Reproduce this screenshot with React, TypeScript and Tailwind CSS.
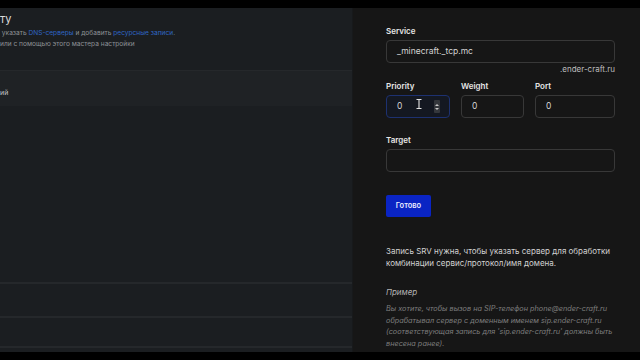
import React from "react";

function Field({ label, value, w, focused }: { label?: string; value: string; w: string; focused?: boolean }) {
  return (
    <div className={`flex shrink-0 flex-col ${w}`}>
      <div className="h-[12px] text-[8px] font-semibold leading-[12px] text-[#e6e6e6]">{label}</div>
      <div
        className={`relative mt-[3px] flex h-[23px] shrink-0 items-center rounded-[4px] border px-[10px] text-[8.5px] text-[#d4d4d4] ${
          focused ? "border-[#1d3170] bg-[#141821]" : "border-[#383838] bg-[#161616]"
        }`}
      >
        {value}
        {focused && (
          <>
            <svg className="absolute left-[29px] top-[3px]" width="6" height="10" viewBox="0 0 6 10">
              <path d="M0.5 0.5h5M0.5 9.5h5M3 0.5v9" stroke="#e5e5e5" strokeWidth="1.1" fill="none" />
            </svg>
            <div className="absolute right-[9px] top-[4px] flex h-[13px] w-[6px] flex-col items-center justify-center gap-[2px] rounded-[1px] bg-[#34373c]">
              <div className="h-0 w-0 border-x-[2px] border-b-[2px] border-x-transparent border-b-[#c8c8c8]" />
              <div className="h-0 w-0 border-x-[2px] border-t-[2px] border-x-transparent border-t-[#c8c8c8]" />
            </div>
          </>
        )}
      </div>
    </div>
  );
}

export default function App() {
  return (
    <div
      className="flex h-[360px] w-[640px] flex-col overflow-hidden bg-black"
      style={{ fontFamily: "Inter, 'Noto Sans', sans-serif" }}
    >
      <div className="h-[8px] shrink-0 bg-black" />
      <div className="flex h-[344px] shrink-0">
        {/* left dimmed page */}
        <div className="flex w-[352px] shrink-0 flex-col bg-[#1b1e21]">
          <div className="shrink-0 pt-[4px] text-[11px] leading-[14px] text-[#dcdcdc]">ту</div>
          <div className="mt-[2px] shrink-0 whitespace-nowrap text-[6.6px] leading-[11px] text-[#8e9296]">
            {"\u00a0"}указать <span className="text-[#2f66c6]">DNS-серверы</span> и добавить{" "}
            <span className="text-[#2f66c6]">ресурсные записи</span>.
          </div>
          <div className="shrink-0 whitespace-nowrap text-[6.6px] leading-[11px] text-[#8e9296]">
            или с помощью этого мастера настройки
          </div>
          <div className="mt-[20px] h-[36px] shrink-0 border-t border-[#25282b] bg-[#1f2225] pt-[17px] text-[7px] leading-[10px] text-[#c2c4c6]">
            ий
          </div>
          <div className="h-[176px] shrink-0" />
          <div className="h-[34px] shrink-0 border-t-[2px] border-[#25282b]" />
          <div className="h-[30px] shrink-0 border-t-[2px] border-[#25282b]" />
          <div className="shrink-0 border-t-[2px] border-[#25282b]" />
        </div>
        <div className="w-[1px] shrink-0 bg-[#17191b]" />
        {/* right drawer */}
        <div className="flex min-w-0 flex-1 flex-col bg-[#161616] pl-[33px] pr-[25px] pt-[17px]">
          <Field label="Service" value="_minecraft._tcp.mc" w="w-full" />
          <div className="mt-[1px] shrink-0 text-right text-[8px] leading-[10px] text-[#bdbdbd]">.ender-craft.ru</div>
          <div className="mt-[6px] flex shrink-0 gap-[11px]">
            <Field label="Priority" value="0" w="w-[64px]" focused />
            <Field label="Weight" value="0" w="w-[63px]" />
            <Field label="Port" value="0" w="flex-1" />
          </div>
          <div className="mt-[16px] shrink-0">
            <Field label="Target" value="" w="w-full" />
          </div>
          <div className="mt-[23px] flex h-[22px] w-[45px] shrink-0 items-center justify-center rounded-[2px] bg-[#0a24c4] text-[7.5px] font-semibold text-[#e8ebff]">
            Готово
          </div>
          <div className="mt-[29px] shrink-0 whitespace-nowrap text-[8px] leading-[11.5px] text-[#d2d2d2]">
            Запись SRV нужна, чтобы указать сервер для обработки
            <br />
            комбинации сервис/протокол/имя домена.
          </div>
          <div className="mt-[18px] shrink-0 text-[8px] italic leading-[11px] text-[#b4b4b4]">Пример</div>
          <div className="mt-[5px] shrink-0 whitespace-nowrap text-[7.3px] italic leading-[11.7px] text-[#7e7e7e]">
            Вы хотите, чтобы вызов на SIP-телефон phone@ender-craft.ru
            <br />
            обрабатывал сервер с доменным именем sip.ender-craft.ru
            <br />
            (соответствующая запись для 'sip.ender-craft.ru' должны быть
            <br />
            внесена ранее).
          </div>
        </div>
      </div>
      <div className="h-[8px] shrink-0 bg-black" />
    </div>
  );
}
